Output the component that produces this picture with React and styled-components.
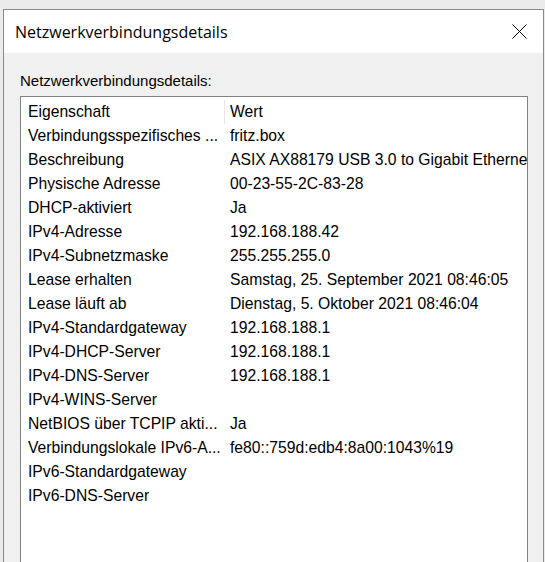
import React from "react";
import styled, { createGlobalStyle } from "styled-components";

const Global = createGlobalStyle`
  html, body { margin: 0; padding: 0; background: #eaeaea; overflow: hidden; }
  body { width: 545px; height: 562px; }
  #root { height: 100%; }
`;

const Screen = styled.div`
  width: 545px;
  height: 562px;
  box-sizing: border-box;
  padding: 9px 1px 0 3px;
  background: #ebebeb;
  display: flex;
  overflow: hidden;
`;

const Window = styled.div`
  flex: 1;
  display: flex;
  flex-direction: column;
  border: 1px solid #8a8a8a;
  border-bottom: none;
  background: #f0f0f0;
  box-sizing: border-box;
`;

const TitleBar = styled.div`
  height: 43px;
  background: #ffffff;
  display: flex;
  align-items: center;
  justify-content: space-between;
  padding: 0 0 0 11px;
  flex-shrink: 0;
`;

const Title = styled.span`
  font-family: "Open Sans", "Noto Sans", sans-serif;
  font-size: 16px;
  color: #000;
`;

const CloseButton = styled.div`
  width: 46px;
  height: 43px;
  display: flex;
  align-items: center;
  justify-content: center;
  margin-right: 1px;
`;

const Body = styled.div`
  flex: 1;
  display: flex;
  flex-direction: column;
  padding: 16px 15px 0 16px;
  font-family: "Liberation Sans", Arial, sans-serif;
  font-size: 15px;
  color: #000;
`;

const GroupLabel = styled.div`
  height: 27px;
  line-height: 23px;
`;

const ListBox = styled.div`
  flex: 1;
  background: #fff;
  border: 1px solid #828282;
  border-bottom: none;
  padding: 3px 0 0 7px;
  font-size: 15.7px;
  overflow: hidden;
`;

const Row = styled.div`
  display: grid;
  grid-template-columns: 196px 1fr;
  height: 24px;
  line-height: 24px;
  white-space: nowrap;
  overflow: hidden;
`;

const Cell = styled.div`
  overflow: hidden;
  padding-left: ${(p) => (p.$value ? (p.$header ? "5px" : "6px") : "0")};
  border-left: ${(p) => (p.$header && p.$value ? "1px solid #e5e5e5" : "none")};
`;

const rows = [
  ["Verbindungsspezifisches ...", "fritz.box"],
  ["Beschreibung", "ASIX AX88179 USB 3.0 to Gigabit Ethernet Adapter"],
  ["Physische Adresse", "00-23-55-2C-83-28"],
  ["DHCP-aktiviert", "Ja"],
  ["IPv4-Adresse", "192.168.188.42"],
  ["IPv4-Subnetzmaske", "255.255.255.0"],
  ["Lease erhalten", "Samstag, 25. September 2021 08:46:05"],
  ["Lease läuft ab", "Dienstag, 5. Oktober 2021 08:46:04"],
  ["IPv4-Standardgateway", "192.168.188.1"],
  ["IPv4-DHCP-Server", "192.168.188.1"],
  ["IPv4-DNS-Server", "192.168.188.1"],
  ["IPv4-WINS-Server", ""],
  ["NetBIOS über TCPIP akti...", "Ja"],
  ["Verbindungslokale IPv6-A...", "fe80::759d:edb4:8a00:1043%19"],
  ["IPv6-Standardgateway", ""],
  ["IPv6-DNS-Server", ""],
];

export default function App() {
  return (
    <>
      <Global />
      <Screen>
        <Window>
          <TitleBar>
            <Title>Netzwerkverbindungsdetails</Title>
            <CloseButton>
              <svg width="15" height="15" viewBox="0 0 15 15">
                <path d="M0.5 0.5L14.5 14.5M14.5 0.5L0.5 14.5" stroke="#000" strokeWidth="1" fill="none" />
              </svg>
            </CloseButton>
          </TitleBar>
          <Body>
            <GroupLabel>Netzwerkverbindungsdetails:</GroupLabel>
            <ListBox>
              <Row>
                <Cell $header>Eigenschaft</Cell>
                <Cell $header $value>Wert</Cell>
              </Row>
              {rows.map(([k, v]) => (
                <Row key={k}>
                  <Cell>{k}</Cell>
                  <Cell $value>{v}</Cell>
                </Row>
              ))}
            </ListBox>
          </Body>
        </Window>
      </Screen>
    </>
  );
}
